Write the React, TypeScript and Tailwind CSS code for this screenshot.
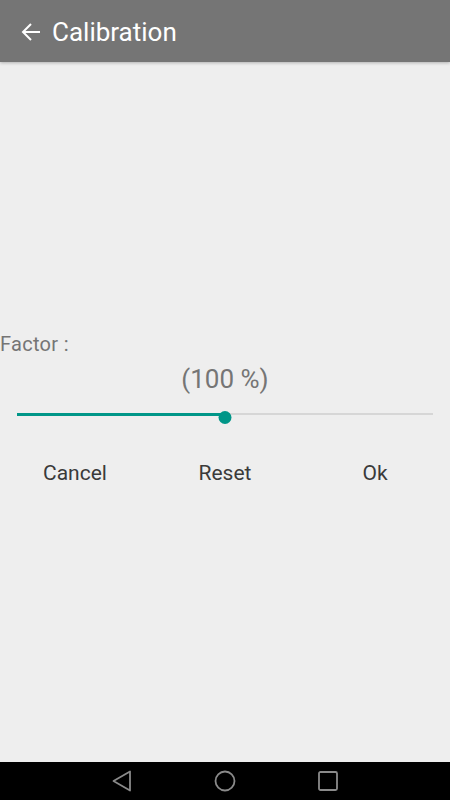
import React from "react";

const App = () => {
  const value = 50;

  return (
    <div className="flex flex-col w-[450px] h-[800px] bg-[#eeeeee] font-['Roboto',sans-serif] overflow-hidden">
      {/* Toolbar */}
      <header className="flex items-center h-[62px] bg-[#757575] shadow-[0_1px_3px_rgba(0,0,0,0.25)] z-10">
        <button className="flex items-center justify-center ml-[19px] mt-[2px] text-white">
          <svg width="24" height="24" viewBox="0 0 24 24" fill="none" stroke="currentColor" strokeWidth="2">
            <path d="M21 12H4M12 4l-8 8 8 8" />
          </svg>
        </button>
        <h1 className="ml-[9px] mt-[2px] text-[26px] text-white leading-none">Calibration</h1>
      </header>

      {/* Content */}
      <main className="flex-1 flex flex-col pt-[270px]">
        <div className="text-[20px] text-[#757575] leading-[24px] tracking-[0.3px]">Factor :</div>
        <div className="mt-[11px] text-center text-[26px] text-[#757575] leading-[24px]">(100 %)</div>

        {/* Slider */}
        <div className="relative mx-[17px] mt-[17px] h-[12px] flex items-center">
          <div className="flex-1 h-[2px] bg-[#d6d6d6]" />
          <div className="absolute left-0 h-[3px] bg-[#009688]" style={{ width: `${value}%` }} />
          <div
            className="absolute w-[13px] h-[13px] rounded-full bg-[#009688] -translate-x-1/2 translate-y-[3px]"
            style={{ left: `${value}%` }}
          />
        </div>

        <div className="grid grid-cols-3 mt-[41px] text-[21px] text-[#3a3a3a] leading-[24px]">
          <button className="text-center">Cancel</button>
          <button className="text-center">Reset</button>
          <button className="text-center">Ok</button>
        </div>
      </main>

      {/* Navigation bar */}
      <nav className="flex items-center justify-center gap-[82px] h-[38px] bg-black">
        <svg width="20" height="22" viewBox="0 0 20 22" fill="none" stroke="#8a8a8a" strokeWidth="1.8" strokeLinejoin="round">
          <path d="M18 1.5v19L1.5 11z" />
        </svg>
        <svg width="22" height="22" viewBox="0 0 22 22" fill="none" stroke="#8a8a8a" strokeWidth="1.8">
          <circle cx="11" cy="11" r="9.5" />
        </svg>
        <svg width="20" height="20" viewBox="0 0 20 20" fill="none" stroke="#8a8a8a" strokeWidth="1.8">
          <rect x="1" y="1" width="18" height="18" rx="1.5" />
        </svg>
      </nav>
    </div>
  );
};

export default App;
